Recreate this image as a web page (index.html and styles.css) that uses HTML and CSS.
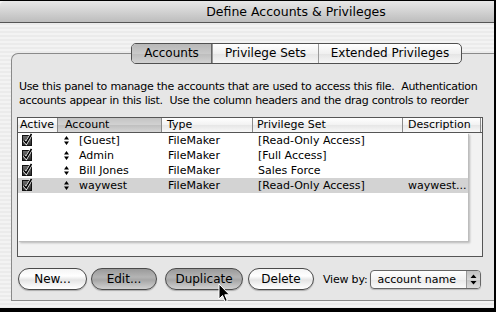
FILE: index.html
```html
<!DOCTYPE html>
<html>
<head>
<meta charset="utf-8">
<link rel="stylesheet" href="styles.css">
</head>
<body>
<div class="frame">
  <div class="titlebar"><span class="title">Define Accounts &amp; Privileges</span></div>
  <div class="content">
    <div class="panel">
      <div class="tabs">
        <div class="tab sel">Accounts</div>
        <div class="tab">Privilege Sets</div>
        <div class="tab">Extended Privileges</div>
      </div>
      <p class="desc">Use this panel to manage the accounts that are used to access this file.&nbsp; Authentication<br>accounts appear in this list.&nbsp; Use the column headers and the drag controls to reorder</p>
      <div class="table">
        <div class="thead">
          <div class="th c-active">Active</div>
          <div class="th c-account sorted">Account</div>
          <div class="th c-type">Type</div>
          <div class="th c-priv">Privilege Set</div>
          <div class="th c-desc">Description</div>
          <div class="th c-rest"></div>
        </div>
        <div class="tbody">
          <div class="list">
            <div class="row">
              <div class="td c-active"><svg class="chk" width="10" height="13" viewBox="0 0 10 13"><defs><linearGradient id="g1" x1="0" y1="0" x2="0" y2="1"><stop offset="0" stop-color="#6e6e6e"/><stop offset="1" stop-color="#2a2a2a"/></linearGradient></defs><rect x="0.5" y="2.5" width="9" height="10" fill="url(#g1)" stroke="#111"/><path d="M2 7.5 L4.2 10 L9.5 1" fill="none" stroke="#fff" stroke-width="3"/><path d="M2 7.5 L4.2 10 L9.5 1" fill="none" stroke="#000" stroke-width="1.6"/></svg></div>
              <div class="td c-account"><svg class="drag" width="5" height="9" viewBox="0 0 5 9"><path d="M2.5 0 L5 3.5 L0 3.5Z M0 5.5 L5 5.5 L2.5 9Z" fill="#000"/></svg><span>[Guest]</span></div>
              <div class="td c-type">FileMaker</div>
              <div class="td c-priv">[Read-Only Access]</div>
              <div class="td c-desc"></div>
            </div>
            <div class="row">
              <div class="td c-active"><svg class="chk" width="10" height="13" viewBox="0 0 10 13"><rect x="0.5" y="2.5" width="9" height="10" fill="url(#g1)" stroke="#111"/><path d="M2 7.5 L4.2 10 L9.5 1" fill="none" stroke="#fff" stroke-width="3"/><path d="M2 7.5 L4.2 10 L9.5 1" fill="none" stroke="#000" stroke-width="1.6"/></svg></div>
              <div class="td c-account"><svg class="drag" width="5" height="9" viewBox="0 0 5 9"><path d="M2.5 0 L5 3.5 L0 3.5Z M0 5.5 L5 5.5 L2.5 9Z" fill="#000"/></svg><span>Admin</span></div>
              <div class="td c-type">FileMaker</div>
              <div class="td c-priv">[Full Access]</div>
              <div class="td c-desc"></div>
            </div>
            <div class="row">
              <div class="td c-active"><svg class="chk" width="10" height="13" viewBox="0 0 10 13"><rect x="0.5" y="2.5" width="9" height="10" fill="url(#g1)" stroke="#111"/><path d="M2 7.5 L4.2 10 L9.5 1" fill="none" stroke="#fff" stroke-width="3"/><path d="M2 7.5 L4.2 10 L9.5 1" fill="none" stroke="#000" stroke-width="1.6"/></svg></div>
              <div class="td c-account"><svg class="drag" width="5" height="9" viewBox="0 0 5 9"><path d="M2.5 0 L5 3.5 L0 3.5Z M0 5.5 L5 5.5 L2.5 9Z" fill="#000"/></svg><span>Bill Jones</span></div>
              <div class="td c-type">FileMaker</div>
              <div class="td c-priv">Sales Force</div>
              <div class="td c-desc"></div>
            </div>
            <div class="row selrow">
              <div class="td c-active"><svg class="chk" width="10" height="13" viewBox="0 0 10 13"><rect x="0.5" y="2.5" width="9" height="10" fill="url(#g1)" stroke="#111"/><path d="M2 7.5 L4.2 10 L9.5 1" fill="none" stroke="#fff" stroke-width="3"/><path d="M2 7.5 L4.2 10 L9.5 1" fill="none" stroke="#000" stroke-width="1.6"/></svg></div>
              <div class="td c-account"><svg class="drag" width="5" height="9" viewBox="0 0 5 9"><path d="M2.5 0 L5 3.5 L0 3.5Z M0 5.5 L5 5.5 L2.5 9Z" fill="#000"/></svg><span>waywest</span></div>
              <div class="td c-type">FileMaker</div>
              <div class="td c-priv">[Read-Only Access]</div>
              <div class="td c-desc">waywest...</div>
            </div>
          </div>
        </div>
      </div>
      <div class="controls">
        <div class="btn b-new">New...</div>
        <div class="btn dark b-edit">Edit...</div>
        <div class="btn dark b-dup">Duplicate</div>
        <div class="btn b-del">Delete</div>
        <span class="viewby">View by:</span>
        <div class="popup"><span class="pv">account name</span><span class="parrows"><svg width="7" height="11" viewBox="0 0 7 11"><path d="M3.5 0.5 L6.5 4 L0.5 4Z M0.5 7 L6.5 7 L3.5 10.5Z" fill="#000"/></svg></span></div>
      </div>
    </div>
  </div>
  <svg class="cursor" width="13" height="20" viewBox="0 0 13 20"><path d="M1 1 L1 16 L4.5 12.5 L7 18.5 L9.3 17.5 L6.8 11.8 L11.5 11.8 Z" fill="#000" stroke="#fff" stroke-width="1"/></svg>
</div>
</body>
</html>
```

FILE: styles.css
```css
* { box-sizing: border-box; }
html, body { margin: 0; padding: 0; }
body {
  width: 496px; height: 312px; overflow: hidden;
  font-family: "DejaVu Sans", "Liberation Sans", sans-serif;
  font-size: 11px; color: #000; background: #000;
}
.frame {
  position: relative;
  width: 496px; height: 312px;
  border-top: 1px solid #000;
  border-right: 2px solid #000;
  border-bottom: 4px solid #000;
  display: flex; flex-direction: column;
  overflow: hidden;
  background: repeating-linear-gradient(to bottom, #f3f3f3 0 2px, #ebebeb 2px 4px);
}
.titlebar {
  height: 22px; flex: none;
  background: linear-gradient(to bottom, #e8e8e8, #bdbdbd);
  border-bottom: 1px solid #555;
  border-top-left-radius: 5px;
  padding-left: 98px;
  text-align: center;
  font-size: 12.5px; line-height: 21px;
}
.content { flex: 1; padding-top: 30px; }
.panel {
  margin-left: 11px; margin-right: -12px;
  height: 248px;
  border: 1px solid #8a8a8a;
  border-right: none;
  border-top-left-radius: 7px;
  background: #e6e6e6;
}
.tabs {
  display: flex;
  margin-top: -11px; margin-left: 119px;
  width: 331px; height: 21px;
  border: 1px solid #505050;
  border-radius: 5px;
  overflow: hidden;
  background: linear-gradient(to bottom, #ffffff, #f0f0f0 50%, #e4e4e4 51%, #f6f6f6);
  font-size: 12px;
}
.tab {
  display: flex; align-items: center; justify-content: center;
  border-left: 1px solid #9a9a9a;
  line-height: 19px;
}
.tab:first-child { border-left: none; width: 80px; }
.tab:nth-child(2) { width: 106px; }
.tab:nth-child(3) { flex: 1; }
.tab.sel {
  background: linear-gradient(to bottom, #b8b8b8, #c9c9c9 50%, #bcbcbc 51%, #d2d2d2);
  border-right: 1px solid #666;
}
.desc {
  margin: 16px 0 0 7px;
  line-height: 14px; font-size: 11px;
  letter-spacing: -0.33px;
  word-spacing: 0.3px;
  white-space: nowrap;
}
.table {
  margin: 9px 0 0 5px;
  width: 466px; height: 140px;
  border: 1px solid #555;
  background: #f2f2f2;
  display: flex; flex-direction: column;
}
.thead {
  display: flex; height: 15px; flex: none;
  border-bottom: 1px solid #555;
  background: linear-gradient(to bottom, #ffffff, #f2f2f2 50%, #e6e6e6 51%, #f8f8f8);
}
.th {
  flex: none;
  line-height: 14px; font-size: 11px;
  border-right: 1px solid #8a8a8a;
  white-space: nowrap; overflow: hidden;
}
.th.sorted {
  background: linear-gradient(to bottom, #c4c4c4, #d2d2d2 50%, #bfbfbf 51%, #d6d6d6);
}
.c-active { width: 40px; padding-left: 2px; }
.c-account { width: 104px; padding-left: 7px; }
.c-type { width: 91px; padding-left: 5px; }
.c-priv { width: 150px; padding-left: 4px; }
.c-desc { width: 78px; padding-left: 5px; }
.th.c-rest { flex: 1; border-right: none; }
.tbody { flex: 1; padding: 0 14px 15px 0; }
.list {
  height: 100%;
  background: #fff;
  overflow: hidden;
  box-shadow: 1px 1px 0 #bdbdbd, 2px 2px 2px rgba(0,0,0,0.25);
}
.row { display: flex; height: 15px; line-height: 15px; white-space: nowrap; }
.row.selrow { background: #d3d3d3; }
.td { flex: none; overflow: hidden; }
.row .c-active { padding-left: 4px; display: flex; align-items: flex-start; }
.row .c-account { padding-left: 6px; display: flex; align-items: center; }
.row .c-account span { margin-left: 10px; }
.row .c-type { padding-left: 6px; }
.row .c-priv { padding-left: 5px; }
.row .c-desc { padding-left: 5px; }
.chk, .drag { display: block; flex: none; }
.controls {
  display: flex; align-items: center;
  margin: 11px 0 0 6px;
  height: 22px;
}
.btn {
  height: 22px; line-height: 20px;
  border: 1px solid #4a4a4a;
  border-radius: 11px;
  text-align: center; font-size: 12px;
  background: linear-gradient(to bottom, #f4f4f4, #ffffff 35%, #e4e4e4 55%, #f7f7f7 85%, #ffffff);
  box-shadow: 0 1px 1px rgba(0,0,0,0.25);
}
.btn.dark {
  background: linear-gradient(to bottom, #9a9a9a, #b4b4b4 40%, #a6a6a6 55%, #c8c8c8 90%, #d0d0d0);
}
.b-new { width: 69px; }
.b-edit { width: 66px; margin-left: 4px; }
.b-dup { width: 78px; margin-left: 8px; }
.b-del { width: 66px; margin-left: 5px; }
.viewby { margin-left: 9px; font-size: 11px; letter-spacing: -0.2px; }
.popup {
  margin-left: 3px;
  width: 111px; height: 19px;
  border: 1px solid #666;
  border-radius: 4px;
  display: flex;
  background: linear-gradient(to bottom, #ffffff, #f2f2f2 50%, #e8e8e8 51%, #fafafa);
  box-shadow: 0 1px 1px rgba(0,0,0,0.2);
  overflow: hidden;
}
.pv { flex: 1; padding-left: 6px; line-height: 17px; font-size: 11px; }
.parrows {
  width: 14px; display: flex; align-items: center; justify-content: center;
  border-left: 1px solid #999;
  background: linear-gradient(to bottom, #c0c0c0, #d8d8d8 50%, #c4c4c4 51%, #dcdcdc);
}
.cursor { position: absolute; left: 218px; top: 282px; }
```
